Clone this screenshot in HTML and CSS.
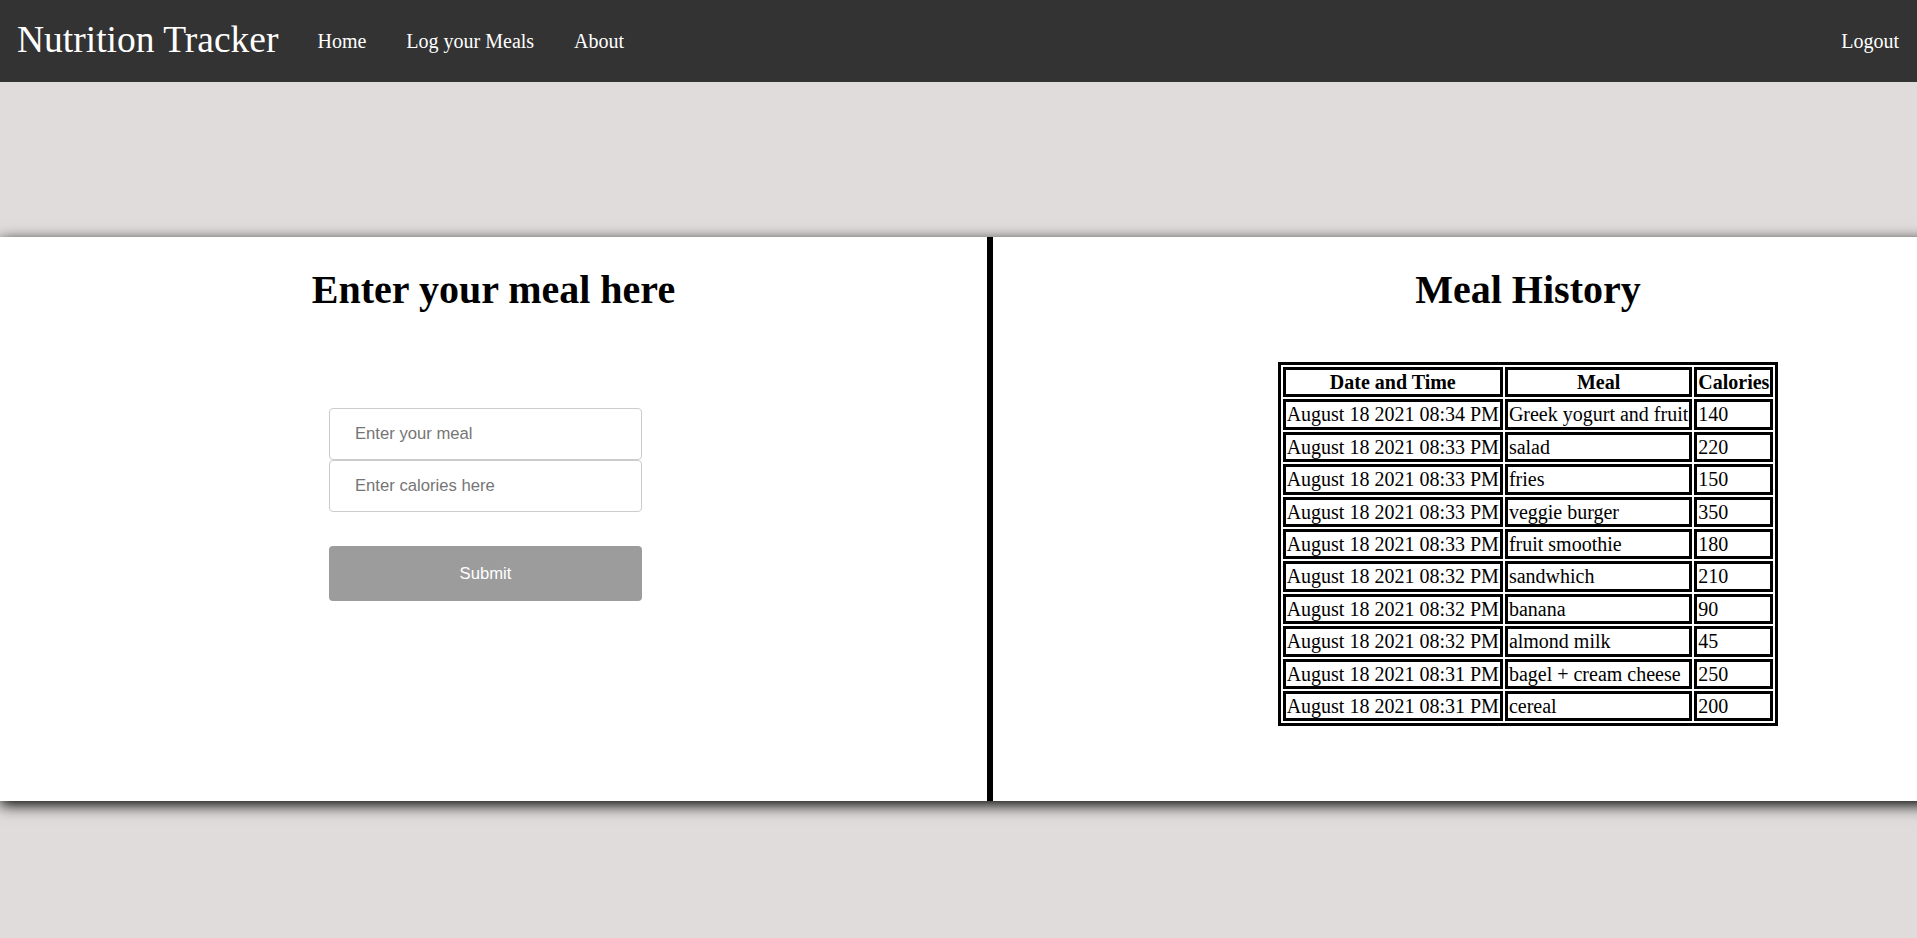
FILE: index.html
```html
<!DOCTYPE html>
<html lang="en">
<head>
<meta charset="utf-8">
<title>Nutrition Tracker</title>
<link rel="stylesheet" href="styles.css">
</head>
<body>
<nav class="navbar">
  <a class="brand" href="#">Nutrition Tracker</a>
  <a class="nav-link" href="#">Home</a>
  <a class="nav-link" href="#">Log your Meals</a>
  <a class="nav-link" href="#">About</a>
  <a class="nav-link logout" href="#">Logout</a>
</nav>
<div class="stage">
  <div class="board">
    <section class="panel panel-left">
      <h1 class="title">Enter your meal here</h1>
      <form class="meal-form">
        <input class="field" type="text" placeholder="Enter your meal">
        <input class="field" type="text" placeholder="Enter calories here">
        <button class="submit" type="button">Submit</button>
      </form>
    </section>
    <section class="panel panel-right">
      <h1 class="title">Meal History</h1>
      <table class="history">
        <tr><th>Date and Time</th><th>Meal</th><th>Calories</th></tr>
        <tr><td>August 18 2021 08:34 PM</td><td>Greek yogurt and fruit</td><td>140</td></tr>
        <tr><td>August 18 2021 08:33 PM</td><td>salad</td><td>220</td></tr>
        <tr><td>August 18 2021 08:33 PM</td><td>fries</td><td>150</td></tr>
        <tr><td>August 18 2021 08:33 PM</td><td>veggie burger</td><td>350</td></tr>
        <tr><td>August 18 2021 08:33 PM</td><td>fruit smoothie</td><td>180</td></tr>
        <tr><td>August 18 2021 08:32 PM</td><td>sandwhich</td><td>210</td></tr>
        <tr><td>August 18 2021 08:32 PM</td><td>banana</td><td>90</td></tr>
        <tr><td>August 18 2021 08:32 PM</td><td>almond milk</td><td>45</td></tr>
        <tr><td>August 18 2021 08:31 PM</td><td>bagel + cream cheese</td><td>250</td></tr>
        <tr><td>August 18 2021 08:31 PM</td><td>cereal</td><td>200</td></tr>
      </table>
    </section>
  </div>
</div>
</body>
</html>
```
FILE: styles.css
```css
html, body {
  margin: 0;
  padding: 0;
}
body {
  background: #dfdcdb;
  font-family: "Liberation Serif", "Times New Roman", serif;
  color: #000;
  height: 938px;
  overflow: hidden;
}
.navbar {
  display: flex;
  align-items: center;
  height: 82px;
  background: #333333;
  padding: 0 18px 0 17px;
  box-sizing: border-box;
}
.navbar a {
  color: #fff;
  text-decoration: none;
}
.brand {
  font-size: 37.5px;
  line-height: 43px;
  padding-bottom: 4px;
  margin-right: 19px;
}
.nav-link {
  font-size: 20px;
  line-height: 23px;
  padding: 0 20px;
}
.logout {
  margin-left: auto;
  padding-right: 0;
}
.stage {
  margin-top: 155px;
  overflow-x: clip;
}
.board {
  display: flex;
  width: 2063px;
  height: 564px;
  background: #fff;
  box-shadow: 0 4px 14px #000;
}
.panel {
  box-sizing: border-box;
  height: 100%;
}
.panel-left {
  flex: 0 0 990px;
  border-right: 3px solid #000;
  display: flow-root;
}
.panel-right {
  flex: 0 0 1073px;
  border-left: 3px solid #000;
  display: flex;
  flex-direction: column;
  align-items: center;
}
.title {
  font-size: 40px;
  font-weight: bold;
  line-height: 44px;
  text-align: center;
  margin: 31px 0 27px;
}
.meal-form {
  display: flex;
  flex-direction: column;
  width: 313px;
  margin: 96px 0 0 329px;
}
.field {
  box-sizing: border-box;
  height: 52px;
  width: 313px;
  border: 1px solid #cccccc;
  border-radius: 4px;
  padding: 0 25px;
  font-family: "Liberation Sans", Arial, sans-serif;
  font-size: 16.67px;
  color: #333;
  background: #fff;
  margin: 0;
}
.field::placeholder {
  color: #757575;
}
.submit {
  margin-top: 34px;
  height: 55px;
  width: 313px;
  border: none;
  border-radius: 4px;
  background: #9c9c9c;
  color: #fff;
  font-family: "Liberation Sans", Arial, sans-serif;
  font-size: 16.67px;
}
.history {
  margin-top: 23px;
  border: 3px solid #000;
  border-spacing: 2.5px;
  font-size: 20px;
}
.history th,
.history td {
  border: 3px solid #000;
  padding: 1px 1px;
  line-height: 22.4px;
}
.history td {
  text-align: left;
}
.history th {
  text-align: center;
  font-weight: bold;
}
```
